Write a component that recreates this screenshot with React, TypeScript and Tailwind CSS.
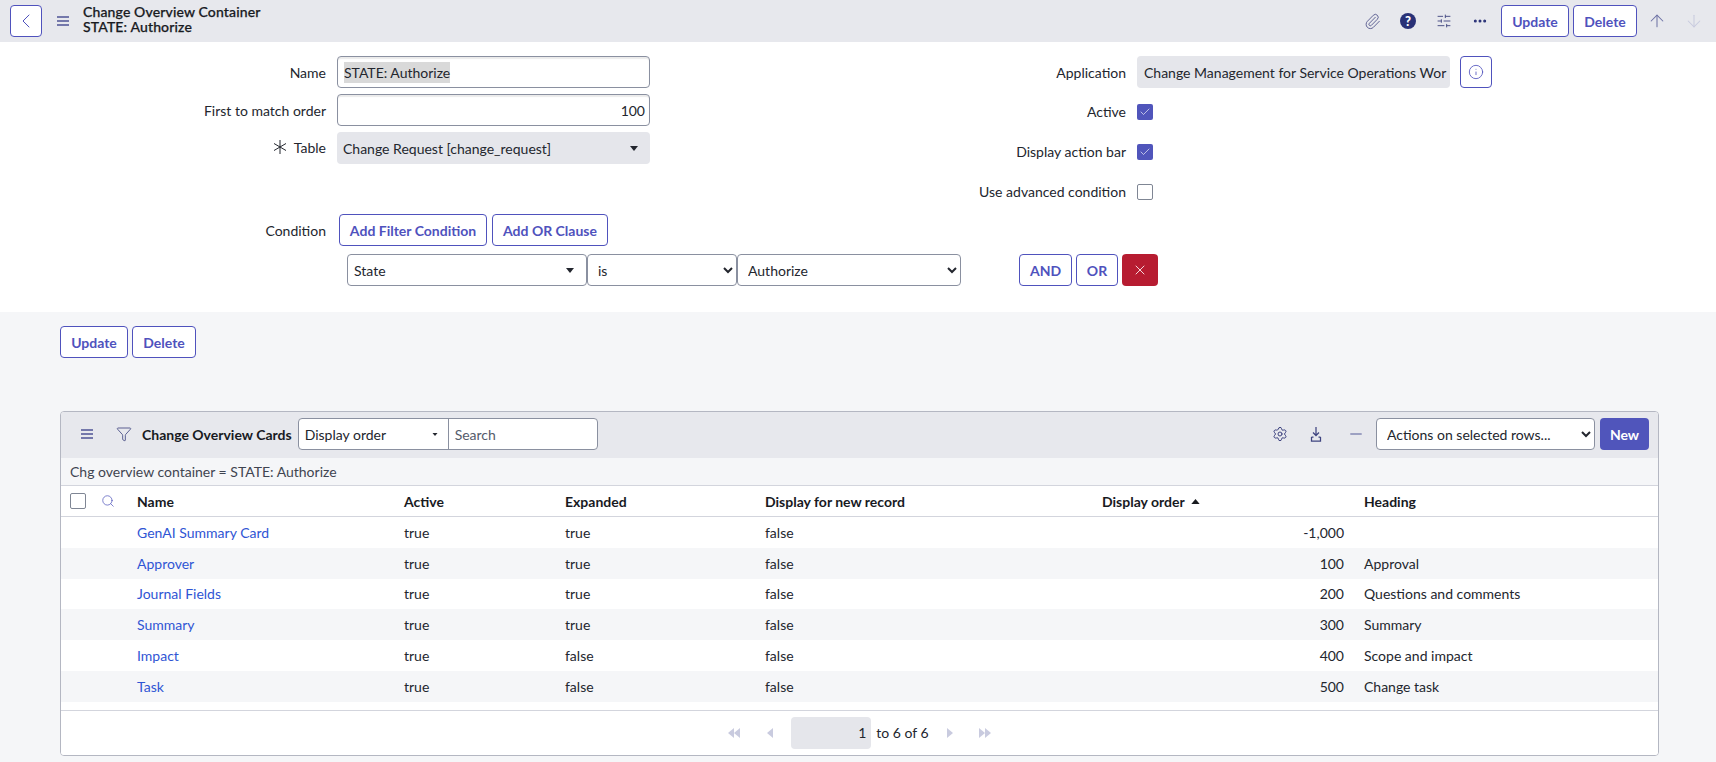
import { ArrowDown, ArrowUp, Check, ChevronLeft, Ellipsis, Funnel, Info, Minus, Paperclip, Search, Settings, SlidersHorizontal, X } from "lucide-react";

const rows = [
  { name: "GenAI Summary Card", active: "true", expanded: "true", order: "-1,000", heading: "" },
  { name: "Approver", active: "true", expanded: "true", order: "100", heading: "Approval" },
  { name: "Journal Fields", active: "true", expanded: "true", order: "200", heading: "Questions and comments" },
  { name: "Summary", active: "true", expanded: "true", order: "300", heading: "Summary" },
  { name: "Impact", active: "true", expanded: "false", order: "400", heading: "Scope and impact" },
  { name: "Task", active: "true", expanded: "false", order: "500", heading: "Change task" },
];

const outlineBtn = "h-8 rounded-[4px] border border-[#4f52bd] bg-white text-[14px] font-bold text-[#4f52bd]";
const gridCols = "grid grid-cols-[76px_267px_161px_200px_337px_262px_1fr]";

function Caret({ className }: { className?: string }) {
  return (
    <svg viewBox="0 0 10 6" className={className} fill="currentColor">
      <path d="M0 0h10L5 6z" />
    </svg>
  );
}

function Bars({ className }: { className?: string }) {
  return (
    <svg viewBox="0 0 12 10" className={className} fill="currentColor">
      <path d="M0 0h12v2H0zM0 4h12v2H0zM0 8h12v2H0z" />
    </svg>
  );
}

function Pager({ flip, double }: { flip?: boolean; double?: boolean }) {
  return (
    <svg viewBox={double ? "0 0 12 10" : "0 0 6 10"} className={double ? "h-[10px] w-3 text-[#c9cbdf]" : "h-[10px] w-[6px] text-[#c9cbdf]"} fill="currentColor">
      <g transform={flip ? (double ? "matrix(-1 0 0 1 12 0)" : "matrix(-1 0 0 1 6 0)") : undefined}>
        <path d="M6 0v10L0 5z" />
        {double && <path d="M12 0v10L6 5z" />}
      </g>
    </svg>
  );
}

function CheckBox({ on }: { on?: boolean }) {
  return on ? (
    <div className="flex h-4 w-4 items-center justify-center rounded-[2px] bg-[#5055bb]">
      <Check className="h-3 w-3 text-white" strokeWidth={1.25} />
    </div>
  ) : (
    <div className="h-4 w-4 rounded-[2px] border border-[#7f8694] bg-white" />
  );
}

function Label({ children }: { children: React.ReactNode }) {
  return <div className="w-[326px] shrink-0 text-right text-[14px] text-[#23262e]">{children}</div>;
}

export default function App() {
  return (
    <div className="min-h-[762px] bg-[#f5f6f8] font-['Lato',sans-serif] text-[14px] text-[#23262e]">
      <div className="flex h-[42px] items-center bg-[#e7e8ed] pl-[10px] pr-[12px]">
        <button className="flex h-8 w-8 items-center justify-center rounded-[4px] border border-[#4f52bd] bg-white text-[#4f52bd]">
          <ChevronLeft className="h-6 w-6" strokeWidth={1} />
        </button>
        <Bars className="ml-[15px] h-[10px] w-3 text-[#7478ab]" />
        <div className="mb-[5px] ml-[14px] text-[14px] font-medium leading-[15px] tracking-[0.01em] text-[#181a1f]">
          <div className="[-webkit-text-stroke:0.25px_#181a1f]">Change Overview Container</div>
          <div className="[-webkit-text-stroke:0.25px_#181a1f]">STATE: Authorize</div>
        </div>
        <div className="ml-auto flex items-center">
          <Paperclip className="h-[17px] w-[17px] text-[#4f5389]" strokeWidth={1.25} />
          <div className="ml-[19px] flex h-4 w-4 items-center justify-center rounded-full bg-[#293177] text-[13px] font-black leading-none text-white">?</div>
          <SlidersHorizontal className="ml-5 h-4 w-4 text-[#4f5389]" strokeWidth={1.5} />
          <Ellipsis className="ml-5 h-4 w-4 text-[#293177]" strokeWidth={2.5} />
          <button className={`${outlineBtn} ml-[13px] w-[68px]`}>Update</button>
          <button className={`${outlineBtn} ml-1 w-[64px]`}>Delete</button>
          <ArrowUp className="ml-[10px] h-5 w-5 text-[#6f73a6]" strokeWidth={1.25} />
          <ArrowDown className="ml-[17px] h-5 w-5 text-[#c9cbdf]" strokeWidth={1.25} />
        </div>
      </div>

      <div className="bg-white pb-[26px] pt-[14px]">
        <div className="flex">
          <div className="flex w-[650px] shrink-0 flex-col gap-[6px]">
            <div className="flex items-center gap-[11px]">
              <Label>Name</Label>
              <div className="flex h-8 w-[313px] items-center rounded-[4px] border border-[#8a90a0] bg-white px-[6px] shadow-[inset_0_2px_1px_rgba(0,0,0,0.08)]">
                <span className="bg-[#d9d9d9]">STATE: Authorize</span>
              </div>
            </div>
            <div className="flex items-center gap-[11px]">
              <Label>First to match order</Label>
              <div className="flex h-8 w-[313px] items-center justify-end rounded-[4px] border border-[#8a90a0] bg-white px-1 shadow-[inset_0_2px_1px_rgba(0,0,0,0.08)]">
                100
              </div>
            </div>
            <div className="flex items-center gap-[11px]">
              <Label>
                <span className="inline-flex items-center justify-end gap-[7px]">
                  <svg viewBox="0 0 14 14" className="h-[14px] w-[14px]" fill="none" stroke="currentColor" strokeWidth="1">
                    <path d="M7 0v14M1 3.500l12 7M13 3.500l-12 7" />
                  </svg>
                  Table
                </span>
              </Label>
              <div className="flex h-8 w-[313px] items-center justify-between rounded-[4px] bg-[#e5e6eb] pl-[6px] pr-[12px]">
                <span>Change Request [change_request]</span>
                <Caret className="h-[5px] w-2 text-[#23262e]" />
              </div>
            </div>
          </div>
          <div className="flex flex-col">
            <div className="flex h-8 items-center gap-[11px]">
              <div className="w-[476px] text-right">Application</div>
              <div className="flex h-8 w-[313px] items-center overflow-hidden whitespace-nowrap rounded-[4px] bg-[#e5e6eb] pl-[7px]">
                Change Management for Service Operations Wor
              </div>
              <button className="-ml-[1px] flex h-8 w-8 items-center justify-center rounded-[4px] border border-[#4f52bd] bg-white text-[#4f52bd]">
                <Info className="h-4 w-4" strokeWidth={1.25} />
              </button>
            </div>
            <div className="mt-1 flex h-10 items-center gap-[11px]">
              <div className="w-[476px] pb-[2px] text-right">Active</div>
              <CheckBox on />
            </div>
            <div className="flex h-10 items-center gap-[11px]">
              <div className="w-[476px] pb-[2px] text-right">Display action bar</div>
              <CheckBox on />
            </div>
            <div className="flex h-10 items-center gap-[11px]">
              <div className="w-[476px] pb-[2px] text-right">Use advanced condition</div>
              <CheckBox />
            </div>
          </div>
        </div>

        <div className="mt-[2px] flex items-center">
          <Label>Condition</Label>
          <button className={`${outlineBtn} ml-[13px] w-[148px]`}>Add Filter Condition</button>
          <button className={`${outlineBtn} ml-[5px] w-[116px]`}>Add OR Clause</button>
        </div>
        <div className="ml-[347px] mt-2 flex items-center">
          <div className="flex h-8 w-[240px] items-center justify-between rounded-[4px] border border-[#8a90a0] bg-white pl-[6px] pr-[12px]">
            <span>State</span>
            <Caret className="h-[5px] w-2 text-[#23262e]" />
          </div>
          <select className="h-8 w-[150px] rounded-[4px] border border-[#8a90a0] bg-white pl-[6px]">
            <option>is</option>
          </select>
          <select className="h-8 w-[224px] rounded-[4px] border border-[#8a90a0] bg-white pl-[6px]">
            <option>Authorize</option>
          </select>
          <button className={`${outlineBtn} ml-[58px] w-[53px]`}>AND</button>
          <button className={`${outlineBtn} ml-1 w-[42px]`}>OR</button>
          <button className="ml-1 flex h-8 w-9 items-center justify-center rounded-[4px] bg-[#b71c31] text-white">
            <X className="h-4 w-4" strokeWidth={1.25} />
          </button>
        </div>
      </div>

      <div className="ml-[60px] mt-[14px] flex gap-1">
        <button className={`${outlineBtn} w-[68px]`}>Update</button>
        <button className={`${outlineBtn} w-[64px]`}>Delete</button>
      </div>

      <div className="ml-[60px] mt-[53px] w-[1599px] overflow-hidden rounded-[4px] border border-[#b4b7c2] bg-white">
        <div className="flex h-[46px] items-start bg-[#e7e8ed] pl-5 pr-[9px] pt-[6px]">
          <div className="flex h-8 items-center">
            <Bars className="h-[10px] w-3 text-[#7478ab]" />
            <Funnel className="ml-[23px] h-4 w-4 text-[#3f4480]" strokeWidth={1.25} />
            <div className="ml-[10px] font-bold text-[#181a1f]">Change Overview Cards</div>
          </div>
          <div className="ml-[6px] flex h-8 w-[300px] rounded-[4px] border border-[#8a90a0] bg-white">
            <div className="flex w-[150px] items-center justify-between border-r border-[#8a90a0] pl-[6px] pr-[10px]">
              <span>Display order</span>
              <Caret className="h-[3px] w-[6px] text-[#23262e]" />
            </div>
            <div className="flex items-center pl-[6px] text-[#555b6b]">Search</div>
          </div>
          <div className="ml-auto flex h-8 items-center">
            <Settings className="h-4 w-4 text-[#3f4480]" strokeWidth={1.5} />
            <svg viewBox="0 0 16 16" className="ml-5 h-4 w-4 text-[#3f4480]" fill="none" stroke="currentColor" strokeWidth="1.25">
              <path d="M8 1v8M5 6.500 8 9.500l3-3M3.500 11h2M10.500 11h2M3.500 11v4h9v-4" />
            </svg>
            <Minus className="ml-[23px] h-[18px] w-[18px] text-[#8589b4]" strokeWidth={1.75} />
            <select className="ml-[11px] h-8 w-[219px] rounded-[4px] border border-[#8a90a0] bg-white pl-[6px]">
              <option>Actions on selected rows...</option>
            </select>
            <button className="ml-[5px] h-8 w-[49px] rounded-[4px] bg-[#5055bb] font-bold text-white">New</button>
          </div>
        </div>
        <div className="flex h-[28px] items-center border-b border-[#d3d5dd] bg-[#f5f6f8] pl-[9px] text-[#3f4450]">
          Chg overview container = STATE: Authorize
        </div>
        <div className={`${gridCols} h-[31px] items-center border-b border-[#d3d5dd] font-bold text-[#181a1f]`}>
          <div className="flex items-center pl-[9px]">
            <div className="h-4 w-4 rounded-[2px] border border-[#7f8694]" />
            <Search className="ml-[15px] h-[14px] w-[14px] text-[#5055bb]" strokeWidth={1.25} />
          </div>
          <div>Name</div>
          <div>Active</div>
          <div>Expanded</div>
          <div>Display for new record</div>
          <div className="flex items-center gap-[6px]">
            Display order
            <Caret className="h-[5px] w-[9px] rotate-180 text-[#181a1f]" />
          </div>
          <div>Heading</div>
        </div>
        {rows.map((r, i) => (
          <div key={r.name} className={`${gridCols} h-[30.8px] items-center ${i % 2 === 1 ? "bg-[#f5f6f8]" : "bg-white"}`}>
            <div />
            <a className="text-[#2f55d4]">{r.name}</a>
            <div>{r.active}</div>
            <div>{r.expanded}</div>
            <div>false</div>
            <div className="pr-5 text-right">{r.order}</div>
            <div>{r.heading}</div>
          </div>
        ))}
        <div className="mt-2 flex h-[45px] items-center justify-center border-t border-[#d3d5dd] bg-white">
          <Pager double />
          <div className="ml-[27px]"><Pager /></div>
          <div className="ml-[18px] flex h-8 w-20 items-center justify-end rounded-[4px] bg-[#e5e6eb] pr-[5px]">1</div>
          <div className="ml-[5px]">to 6 of 6</div>
          <div className="ml-[18px]"><Pager flip /></div>
          <div className="ml-[26px]"><Pager double flip /></div>
        </div>
      </div>
    </div>
  );
}
